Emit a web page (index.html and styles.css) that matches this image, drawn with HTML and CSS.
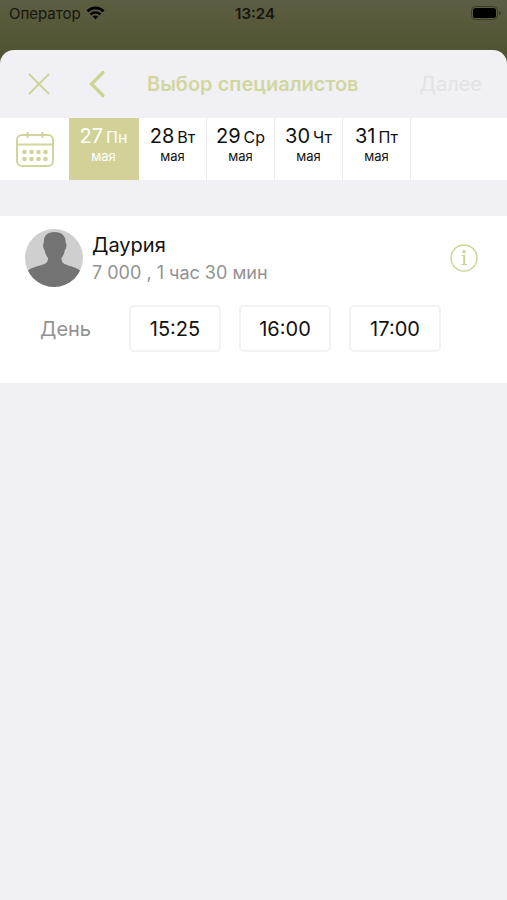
FILE: index.html
```html
<!DOCTYPE html>
<html lang="ru">
<head>
<meta charset="utf-8">
<meta name="viewport" content="width=device-width, initial-scale=1">
<title>Выбор специалистов</title>
<link rel="stylesheet" href="styles.css">
</head>
<body>
<div class="status">
  <div class="carrier">
    <span>Оператор</span>
    <svg class="wifi" width="19" height="14" viewBox="0 0 20 14" aria-hidden="true">
      <path d="M1.500 5.200C6.500 .3 13.500 .3 18.500 5.200" fill="none" stroke="currentColor" stroke-width="2.800"/>
      <path d="M4.700 8.600C7.900 5.600 12.100 5.600 15.300 8.600" fill="none" stroke="currentColor" stroke-width="2.600"/>
      <path d="M7 10.700C8.800 9.200 11.200 9.200 13 10.700L10 13.700z" fill="currentColor"/>
    </svg>
  </div>
  <time class="clock">13:24</time>
  <svg class="battery" width="30" height="14" viewBox="0 0 30 14" aria-hidden="true">
    <rect x=".5" y=".5" width="26" height="13" rx="4" fill="none" stroke="#3b3c25"/>
    <rect x="2" y="2" width="23" height="10" rx="2.500"/>
    <path d="M28 4.500C30.500 5.500 30.500 8.500 28 9.500z" fill="#3b3c25"/>
  </svg>
</div>
<main class="sheet">
  <header class="nav">
    <button class="icon-button" type="button" aria-label="Закрыть">
      <svg width="22" height="22" viewBox="0 0 22 22"><path d="M1 1L21 21M21 1L1 21" fill="none" stroke="currentColor" stroke-width="1.800"/></svg>
    </button>
    <button class="icon-button back" type="button" aria-label="Назад">
      <svg width="18" height="28" viewBox="0 0 18 28"><path d="M15 2.500L3.500 14L15 25.500" fill="none" stroke="currentColor" stroke-width="3.400" stroke-linecap="round"/></svg>
    </button>
    <h1 class="title">Выбор специалистов</h1>
    <button class="next" type="button" disabled>Далее</button>
  </header>
  <nav class="days">
    <button class="calendar" type="button" aria-label="Календарь">
      <svg width="38" height="36" viewBox="0 0 38 36" fill="none" stroke="currentColor" stroke-width="2">
        <rect x="1" y="4" width="36" height="31" rx="5"/>
        <path d="M1 13.500H37M11.500 1V7M26.500 1V7"/>
        <g fill="currentColor" stroke="none">
          <circle cx="8.500" cy="21" r="2.300"/><circle cx="15.500" cy="21" r="2.300"/><circle cx="22.500" cy="21" r="2.300"/><circle cx="29.500" cy="21" r="2.300"/>
          <circle cx="8.500" cy="28" r="2.300"/><circle cx="15.500" cy="28" r="2.300"/><circle cx="22.500" cy="28" r="2.300"/><circle cx="29.500" cy="28" r="2.300"/>
        </g>
      </svg>
    </button>
    <button class="day selected" type="button"><span class="date"><span>27</span><small>Пн</small></span><span class="month">мая</span></button>
    <button class="day" type="button"><span class="date"><span>28</span><small>Вт</small></span><span class="month">мая</span></button>
    <button class="day" type="button"><span class="date"><span>29</span><small>Ср</small></span><span class="month">мая</span></button>
    <button class="day" type="button"><span class="date"><span>30</span><small>Чт</small></span><span class="month">мая</span></button>
    <button class="day" type="button"><span class="date"><span>31</span><small>Пт</small></span><span class="month">мая</span></button>
  </nav>
  <section class="card">
    <div class="person">
      <svg class="avatar" width="58" height="58" viewBox="0 0 58 58" aria-hidden="true">
        <defs><clipPath id="round"><circle cx="29" cy="29" r="29"/></clipPath></defs>
        <g clip-path="url(#round)">
          <rect width="58" height="58" fill="#cfcfcf"/>
          <path d="M29.500 3C22 3 18.500 7 18.800 14C17.500 15 18 20 19.600 21C20.300 25 21.500 27 23 29C23 32 22.500 33.500 19.500 35C13 37.500 6 38.500 3 41.500L0 58H58L55 41.500C52 38.500 45 37.500 39.500 35C37 33.500 36.500 32 36.500 29C38 27 39.200 25 39.900 21C41.500 20 42 15 40.700 14C41 7 37 3 29.500 3z" fill="#737373"/>
        </g>
      </svg>
      <div class="about">
        <h2 class="name">Даурия</h2>
        <p class="details">7 000 , 1 час 30 мин</p>
      </div>
      <button class="icon-button" type="button" aria-label="Информация">
        <svg width="28" height="28" viewBox="0 0 28 28">
          <circle cx="14" cy="14" r="13" fill="none" stroke="currentColor" stroke-width="1.400"/>
          <circle cx="14" cy="7.800" r="1.700" fill="currentColor"/>
          <path d="M11.500 11H15.200V20H17V21H11.500V20H13.200V12H11.500z" fill="currentColor"/>
        </svg>
      </button>
    </div>
    <div class="slots">
      <span class="period">День</span>
      <button class="slot" type="button">15:25</button>
      <button class="slot" type="button">16:00</button>
      <button class="slot" type="button">17:00</button>
    </div>
  </section>
</main>
</body>
</html>
```
FILE: styles.css
```css
* {
  box-sizing: border-box;
}

body {
  display: flex;
  flex-direction: column;
  min-height: 100vh;
  margin: 0;
  background: linear-gradient(#5e5d43, #515432 50px, #515432);
  color: #111;
  font-family: Inter, "Liberation Sans", sans-serif;
}

button {
  padding: 0;
  border: 0;
  background: none;
  color: inherit;
  font: inherit;
}

svg {
  display: block;
}

h1,
h2,
p {
  margin: 0;
}

.status {
  display: grid;
  grid-template-columns: 1fr auto 1fr;
  align-items: center;
  height: 50px;
  padding: 0 6px 24px 9px;
  color: #15160d;
  font-size: 15px;
}

.carrier {
  display: flex;
  align-items: center;
  gap: 5px;
}

.wifi {
  color: #000;
}

.clock {
  font-size: 15px;
  font-weight: 600;
}

.battery {
  justify-self: end;
}

.sheet {
  flex: 1;
  border-radius: 14px 14px 0 0;
  background: #f0f0f5;
}

.nav {
  display: flex;
  align-items: center;
  height: 68px;
  padding: 0 25px 0 28px;
  font-size: 20px;
}

.icon-button {
  color: #ced496;
}

.back {
  margin-left: 38px;
}

.title {
  flex: 1;
  margin-left: 41px;
  color: #d2d69f;
  font-size: 20px;
  font-weight: 600;
}

.next {
  color: #e2e2e7;
}

.days {
  display: flex;
  height: 62px;
  background: #fff;
}

.calendar {
  display: flex;
  align-items: center;
  justify-content: center;
  width: 69px;
  color: #d2d49b;
}

.day {
  display: flex;
  flex-direction: column;
  align-items: center;
  width: 68px;
  padding-top: 6px;
  border-right: 1px solid #ebebef;
}

.day.selected {
  width: 70px;
  border-color: #d2d298;
  background: #d2d298;
  color: #fff;
}

.date {
  display: flex;
  align-items: baseline;
  gap: 3px;
  font-size: 20px;
  line-height: 24px;
}

.date small {
  font-size: 16px;
}

.month {
  font-size: 13px;
  line-height: 14px;
}

.card {
  margin-top: 36px;
  padding: 13px 29px 31px 25px;
  background: #fff;
}

.person {
  display: flex;
  align-items: center;
}

.about {
  flex: 1;
  margin-left: 9px;
}

.name {
  font-size: 20px;
  font-weight: 400;
  line-height: 30px;
}

.details {
  color: #929292;
  font-size: 18px;
  line-height: 26px;
}

.slots {
  display: flex;
  align-items: center;
  gap: 18px;
  margin-top: 18px;
  padding-left: 15px;
  font-size: 20px;
}

.period {
  width: 71px;
  color: #929292;
}

.slot {
  width: 92px;
  height: 47px;
  border: 2px solid #f2f2f2;
  border-radius: 5px;
}
```
